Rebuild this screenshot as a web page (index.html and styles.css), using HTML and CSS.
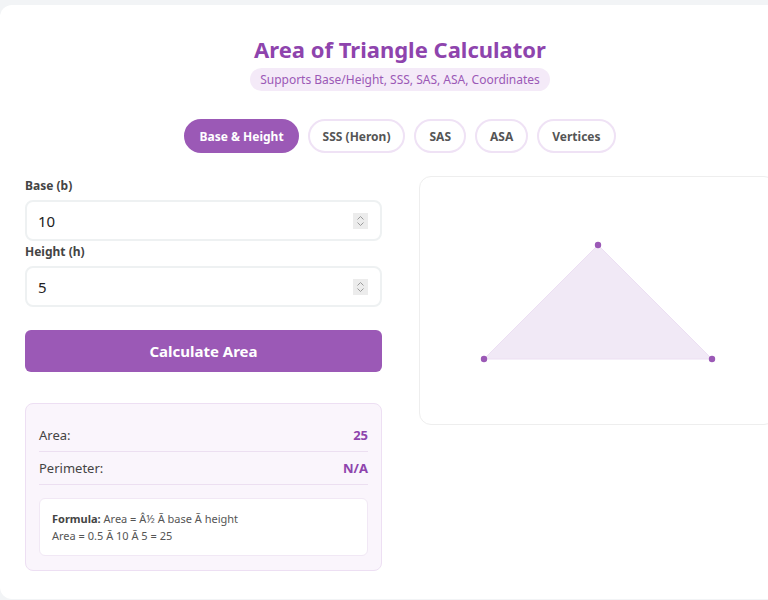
FILE: index.html
```html
<!DOCTYPE html>
<html>
<head>
<meta charset="utf-8">
<link rel="stylesheet" href="styles.css">
</head>
<body>
<div class="card">
  <header class="head">
    <h1 class="title">Area of Triangle Calculator</h1>
    <span class="subtitle">Supports Base/Height, SSS, SAS, ASA, Coordinates</span>
  </header>
  <nav class="tabs">
    <button class="tab active">Base &amp; Height</button>
    <button class="tab">SSS (Heron)</button>
    <button class="tab">SAS</button>
    <button class="tab">ASA</button>
    <button class="tab">Vertices</button>
  </nav>
  <div class="cols">
    <div class="left">
      <label class="label">Base (b)</label>
      <div class="field">
        <input class="input" type="text" value="10">
        <span class="spin"><svg width="9" height="12" viewBox="0 0 9 12"><path d="M1.5 4.5 L4.5 1.5 L7.5 4.5 M1.5 7.5 L4.5 10.5 L7.5 7.5" fill="none" stroke="#9a9a9a" stroke-width="1"/></svg></span>
      </div>
      <label class="label">Height (h)</label>
      <div class="field">
        <input class="input" type="text" value="5">
        <span class="spin"><svg width="9" height="12" viewBox="0 0 9 12"><path d="M1.5 4.5 L4.5 1.5 L7.5 4.5 M1.5 7.5 L4.5 10.5 L7.5 7.5" fill="none" stroke="#9a9a9a" stroke-width="1"/></svg></span>
      </div>
      <button class="calc">Calculate Area</button>
      <div class="results">
        <div class="row"><span>Area:</span><span class="val">25</span></div>
        <div class="row"><span>Perimeter:</span><span class="val">N/A</span></div>
        <div class="formula"><b>Formula:</b> Area = Â½ Ã base Ã height<br>Area = 0.5 Ã 10 Ã 5 = 25</div>
      </div>
    </div>
    <div class="right">
      <svg class="tri" width="357" height="249" viewBox="0 0 357 249">
        <polygon points="64,182 178,68 292,182" fill="#f1e9f6" stroke="#ecdff3" stroke-width="1"/>
        <circle cx="64" cy="182" r="3.2" fill="#9b59b6"/>
        <circle cx="178" cy="68" r="3.2" fill="#9b59b6"/>
        <circle cx="292" cy="182" r="3.2" fill="#9b59b6"/>
      </svg>
    </div>
  </div>
</div>
</body>
</html>
```
FILE: styles.css
```css
* { box-sizing: border-box; }
html, body { margin: 0; padding: 0; }
body {
  background: #f2f4f6;
  font-family: "Noto Sans", "Open Sans", sans-serif;
  color: #444;
  width: 800px;
  padding-top: 5px;
}
.card {
  width: 800px;
  background: #fff;
  border-radius: 12px;
  padding: 28px 25px 28px;
}
.head {
  display: flex;
  flex-direction: column;
  align-items: center;
}
.title {
  margin: 0;
  font-size: 22px;
  font-weight: 700;
  color: #8e44ad;
  line-height: 32px;
}
.subtitle {
  margin-top: 3px;
  background: #f4eaf8;
  color: #9b59b6;
  font-size: 12px;
  line-height: 23px;
  padding: 0 10px;
  border-radius: 12px;
}
.tabs {
  display: flex;
  justify-content: center;
  gap: 9px;
  margin-top: 28px;
}
.tab {
  font-family: inherit;
  font-size: 12px;
  font-weight: 700;
  color: #555;
  background: #fff;
  border: 2px solid #efe2f5;
  border-radius: 17px;
  height: 34px;
  padding: 0 13px;
}
.tab.active {
  background: #9b59b6;
  border-color: #9b59b6;
  color: #fff;
}
.cols {
  display: grid;
  grid-template-columns: 357px 357px;
  gap: 37px;
  margin-top: 23px;
}
.left { display: flex; flex-direction: column; padding-top: 2px; }
.label {
  font-size: 12px;
  font-weight: 700;
  color: #444;
  line-height: 16px;
  margin-bottom: 6px;
}
.field {
  display: flex;
  align-items: center;
  height: 41px;
  border: 2px solid #eef1f2;
  border-radius: 8px;
  padding: 0 11px 0 11px;
  margin-bottom: 3px;
}
.input {
  flex: 1;
  border: 0;
  outline: none;
  font-family: inherit;
  font-size: 15px;
  color: #222;
  padding: 0;
  background: transparent;
  min-width: 0;
}
.spin {
  width: 15px;
  height: 16px;
  background: #ececec;
  display: flex;
  align-items: center;
  justify-content: center;
  margin-right: 1px;
}
.calc {
  margin-top: 20px;
  height: 42px;
  border: 0;
  border-radius: 6px;
  background: #9b59b6;
  color: #fff;
  font-family: inherit;
  font-size: 15px;
  font-weight: 700;
}
.results {
  margin-top: 31px;
  background: #faf5fc;
  border: 1px solid #eddff3;
  border-radius: 8px;
  padding: 15px 13px 14px;
}
.row {
  display: flex;
  justify-content: space-between;
  align-items: center;
  font-size: 13px;
  color: #444;
  height: 33px;
  border-bottom: 1px solid #ecdff1;
}
.row .val {
  color: #8e44ad;
  font-weight: 700;
}
.formula {
  margin-top: 13px;
  background: #fff;
  border: 1px solid #f1e8f5;
  border-radius: 6px;
  padding: 11px 12px;
  font-size: 11px;
  line-height: 17px;
  color: #555;
}
.formula b { color: #444; }
.right {
  height: 249px;
  border: 1px solid #eeeeee;
  border-radius: 12px;
  overflow: hidden;
}
.tri { display: block; }
```
